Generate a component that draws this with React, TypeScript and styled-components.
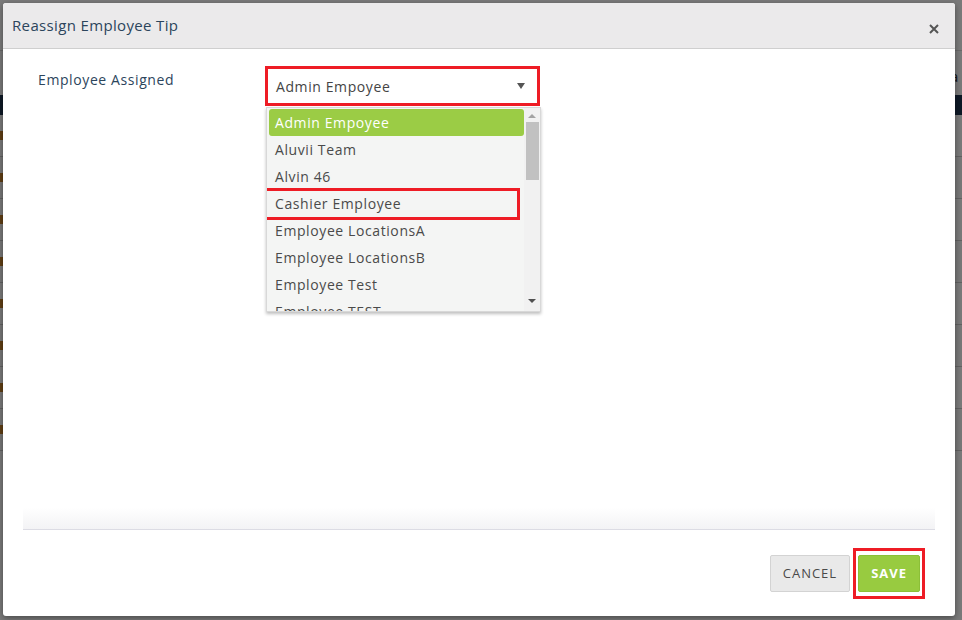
import React from 'react'
import styled, { createGlobalStyle } from 'styled-components'

const Global = createGlobalStyle`
	html, body {
		margin: 0;
		padding: 0;
		width: 962px;
		height: 620px;
		overflow: hidden;
		font-family: "Open Sans", Lato, Arial, sans-serif;
	}
`

// page behind the dialog, only visible at the edges
const Page = styled.div`
	position: relative;
	width: 962px;
	height: 620px;
	background: #fff;
	overflow: hidden;
`
const PageTop = styled.div`
	height: 50px;
	border-bottom: 1px solid #ddd;
`
const PageTitle = styled.div`
	height: 44px;
	padding-left: 950px;
	line-height: 50px;
	font-size: 15px;
	color: #333;
`
const PageHead = styled.div`
	height: 20px;
	background: #1f3550;
`
const PageRow = styled.div`
	height: 41px;
	border-bottom: 1px solid #ccc;
	background: ${p => (p.$odd ? '#fafafa' : '#fff')};
	display: flex;
	align-items: center;
	&::before {
		content: '';
		width: 5px;
		height: 9px;
		background: #c8852a;
		margin-left: -1px;
	}
`
const Overlay = styled.div`
	position: absolute;
	inset: 0;
	background: rgba(0, 0, 0, 0.52);
`

const Modal = styled.div`
	position: absolute;
	left: 3px;
	top: 3px;
	width: 952px;
	height: 613px;
	background: #fff;
	border-radius: 3px;
	box-shadow: 0 2px 6px rgba(0, 0, 0, 0.4);
	display: flex;
	flex-direction: column;
	overflow: hidden;
`
const Header = styled.div`
	height: 45px;
	flex-shrink: 0;
	background: #ebeaeb;
	border-bottom: 1px solid #cfcfcf;
	display: flex;
	align-items: center;
	justify-content: space-between;
	padding: 0 14px 0 9px;
`
const Title = styled.h4`
	margin: -2px 0 0;
	font-size: 15px;
	font-weight: 400;
	color: #2c455c;
	letter-spacing: 0.35px;
`
const Close = styled.button`
	border: 0;
	background: none;
	padding: 0;
	margin-top: 6px;
	width: 14px;
	height: 14px;
	display: flex;
	cursor: pointer;
`
const Body = styled.div`
	flex: 1;
	margin: 0 20px;
	padding: 18px 15px 0;
	border-bottom: 1px solid #dcdce4;
	background: linear-gradient(to bottom, #fff 0, #fff calc(100% - 22px), #f3f3f5 100%);
`
const FieldRow = styled.div`
	display: grid;
	grid-template-columns: 227px 275px;
	align-items: start;
`
const Label = styled.label`
	font-size: 14px;
	color: #2c455c;
	padding-top: 3px;
	letter-spacing: 0.6px;
`
const SelectWrap = styled.div`
	position: relative;
	margin-top: -1px;
`
const SelectBox = styled.div`
	height: 34px;
	border: 3px solid #ee1c25;
	background: #fff;
	display: flex;
	align-items: center;
	justify-content: space-between;
	padding: 0 12px 0 8px;
	font-size: 14px;
	color: #444;
	letter-spacing: 0.6px;
`
const Caret = styled.span`
	width: 0;
	height: 0;
	border-left: 4px solid transparent;
	border-right: 4px solid transparent;
	border-top: 6px solid #555;
`
const List = styled.div`
	position: absolute;
	top: 41px;
	left: 1px;
	width: 275px;
	height: 205px;
	background: #f4f5f4;
	border: 1px solid #d8d8d8;
	box-sizing: border-box;
	box-shadow: 0 2px 3px rgba(0, 0, 0, 0.25);
	display: flex;
	overflow: hidden;
`
const Options = styled.div`
	flex: 1;
	padding: 1px 0 0 2px;
	overflow: hidden;
`
const Option = styled.div`
	position: relative;
	height: 27px;
	line-height: 27px;
	padding: 0 6px;
	font-size: 14px;
	letter-spacing: 0.6px;
	border-radius: 3px;
	white-space: nowrap;
	color: ${p => (p.$active ? '#fff' : '#4a4a4a')};
	background: ${p => (p.$active ? '#9bcc45' : 'transparent')};
`
const Mark = styled.span`
	position: absolute;
	left: -7px;
	top: -2px;
	width: 258px;
	height: 32px;
	box-sizing: border-box;
	border: 3px solid #ee1c25;
	pointer-events: none;
`
const Scrollbar = styled.div`
	width: 16px;
	background: #f1f1f1;
	display: flex;
	flex-direction: column;
	align-items: center;
	padding-top: 6px;
	gap: 4px;
	position: relative;
`
const Arrow = styled.span`
	width: 0;
	height: 0;
	border-left: 4px solid transparent;
	border-right: 4px solid transparent;
	${p => (p.$down ? 'border-top: 4px solid #505050;' : 'border-bottom: 4px solid #a3a3a3;')}
`
const Thumb = styled.div`
	width: 13px;
	height: 58px;
	background: #c1c1c1;
`
const DownArrow = styled.div`
	position: absolute;
	bottom: 8px;
	display: flex;
`
const Footer = styled.div`
	height: 86px;
	flex-shrink: 0;
	display: flex;
	justify-content: flex-end;
	align-items: center;
	gap: 3px;
	padding: 0 30px 0 0;
	box-sizing: border-box;
`
const Button = styled.button`
	height: 37px;
	padding: 0 12px;
	border-radius: 2px;
	font-family: inherit;
	font-size: 13px;
	letter-spacing: 1px;
	text-transform: uppercase;
	border: 1px solid ${p => (p.$primary ? '#8cbf38' : '#d3d3d3')};
	background: ${p => (p.$primary ? '#98cb40' : '#e9e9e9')};
	color: ${p => (p.$primary ? '#fff' : '#4a4a4a')};
	font-weight: ${p => (p.$primary ? 700 : 400)};
`
const SaveMark = styled.div`
	border: 3px solid #ee1c25;
	padding: 4px 2px;
	display: flex;
`

const options = [
	'Admin Empoyee',
	'Aluvii Team',
	'Alvin 46',
	'Cashier Employee',
	'Employee LocationsA',
	'Employee LocationsB',
	'Employee Test',
	'Employee TEST',
]

export default function App() {
	return <>
		<Global />
		<Page>
			<PageTop />
			<PageTitle>a</PageTitle>
			<PageHead />
			{[0, 1, 2, 3, 4, 5, 6, 7].map(i => <PageRow key={i} $odd={i % 2 === 1} />)}
			<Overlay />
			<Modal>
				<Header>
					<Title>Reassign Employee Tip</Title>
					<Close aria-label="Close">
						<svg width="14" height="14" viewBox="0 0 14 14">
							<path d="M3 3 L11 11 M11 3 L3 11" stroke="#555" strokeWidth="2" />
						</svg>
					</Close>
				</Header>
				<Body>
					<FieldRow>
						<Label>Employee Assigned</Label>
						<SelectWrap>
							<SelectBox>
								<span>Admin Empoyee</span>
								<Caret />
							</SelectBox>
							<List>
								<Options>
									{options.map((o, i) => <Option key={o} $active={i === 0}>
										{o}
										{o === 'Cashier Employee' && <Mark />}
									</Option>)}
								</Options>
								<Scrollbar>
									<Arrow />
									<Thumb />
									<DownArrow><Arrow $down /></DownArrow>
								</Scrollbar>
							</List>
						</SelectWrap>
					</FieldRow>
				</Body>
				<Footer>
					<Button>Cancel</Button>
					<SaveMark>
						<Button $primary>Save</Button>
					</SaveMark>
				</Footer>
			</Modal>
		</Page>
	</>
}
